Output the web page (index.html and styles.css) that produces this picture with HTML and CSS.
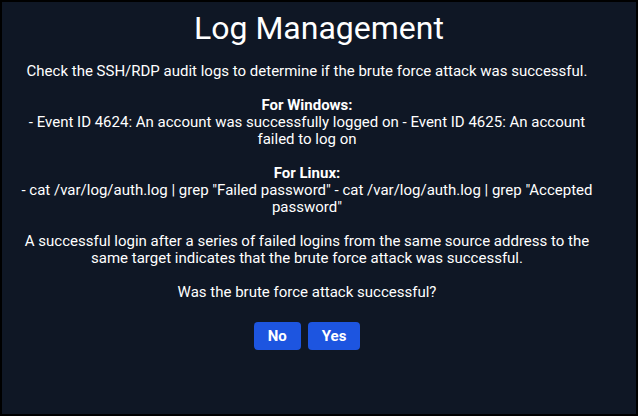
FILE: index.html
```html
<!DOCTYPE html>
<html>
<head>
<meta charset="utf-8">
<link rel="stylesheet" href="styles.css">
</head>
<body>
<div class="modal">
  <h1 class="title">Log Management</h1>
  <div class="content">
    <div class="body">
      <p>Check the SSH/RDP audit logs to determine if the brute force attack was successful.</p>
      <p><strong>For Windows:</strong><br>- Event ID 4624: An account was successfully logged on - Event ID 4625: An account failed to log on</p>
      <p><strong>For Linux:</strong><br>- cat /var/log/auth.log | grep "Failed password" - cat /var/log/auth.log | grep "Accepted password"</p>
      <p>A successful login after a series of failed logins from the same source address to the same target indicates that the brute force attack was successful.</p>
      <p>Was the brute force attack successful?</p>
    </div>
    <div class="actions">
      <button class="btn">No</button>
      <button class="btn">Yes</button>
    </div>
  </div>
</div>
</body>
</html>
```
FILE: styles.css
```css
html, body {
  margin: 0;
  padding: 0;
  background: #000;
}
.modal {
  box-sizing: border-box;
  width: 638px;
  height: 416px;
  border: 2px solid #000;
  background: #0f1725;
  color: #fff;
  font-family: Roboto, "Noto Sans", sans-serif;
  text-align: center;
  padding-top: 8px;
}
.title {
  margin: 0;
  font-weight: 400;
  font-size: 32px;
  line-height: 36px;
}
.content {
  padding: 0 38px 0 14px;
}
.body {
  margin-top: 17px;
  font-size: 15px;
  line-height: 17px;
}
.body p {
  margin: 0 0 17px;
}
.actions {
  display: flex;
  justify-content: center;
  gap: 7px;
  margin-top: 21px;
}
.btn {
  background: #1d55e0;
  color: #fff;
  border: none;
  border-radius: 4px;
  font-family: Roboto, sans-serif;
  font-weight: 700;
  font-size: 15px;
  height: 28px;
  padding: 0 14px;
  cursor: pointer;
}
```
